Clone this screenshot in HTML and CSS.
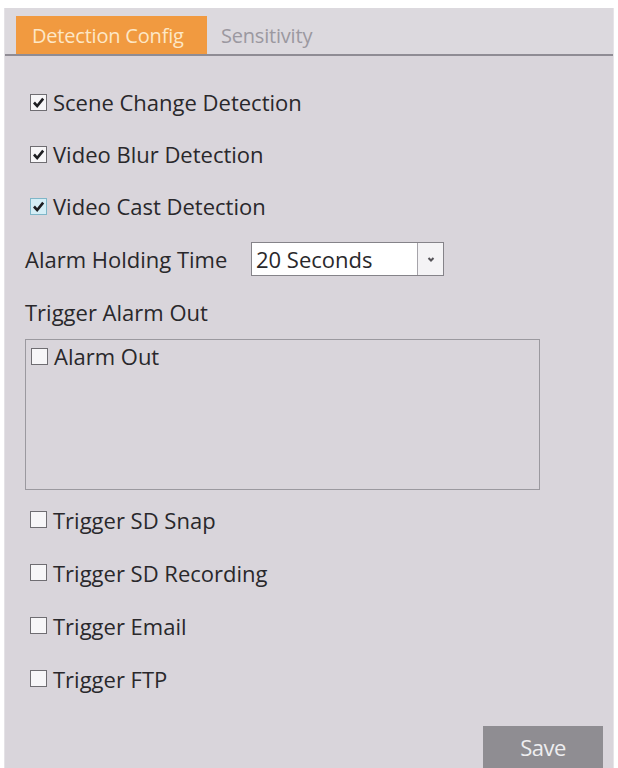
FILE: index.html
```html
<!DOCTYPE html>
<html>
<head>
<meta charset="utf-8">
<link rel="stylesheet" href="styles.css">
</head>
<body>
<div class="panel">
  <div class="tabs">
    <div class="tab active">Detection Config</div>
    <div class="tab">Sensitivity</div>
  </div>
  <div class="content">
    <label class="row"><span class="cb checked"><svg viewBox="0 0 16 16"><path d="M3.2 8 L6.6 11.8 L13 3.8" /></svg></span>Scene Change Detection</label>
    <label class="row"><span class="cb checked"><svg viewBox="0 0 16 16"><path d="M3.2 8 L6.6 11.8 L13 3.8" /></svg></span>Video Blur Detection</label>
    <label class="row"><span class="cb checked focus"><svg viewBox="0 0 16 16"><path d="M3.2 8 L6.6 11.8 L13 3.8" /></svg></span>Video Cast Detection</label>
    <div class="row select-row">
      <span class="label">Alarm Holding Time</span>
      <div class="select">
        <span class="value">20 Seconds</span>
        <span class="arrow"><svg viewBox="0 0 10 10"><path d="M2.5 4 L5 6.5 L7.5 4" /></svg></span>
      </div>
    </div>
    <div class="row plain">Trigger Alarm Out</div>
    <div class="alarm-box">
      <label class="inner"><span class="cb"></span>Alarm Out</label>
    </div>
    <div class="triggers">
      <label class="row"><span class="cb"></span>Trigger SD Snap</label>
      <label class="row"><span class="cb"></span>Trigger SD Recording</label>
      <label class="row"><span class="cb"></span>Trigger Email</label>
      <label class="row"><span class="cb"></span>Trigger FTP</label>
    </div>
    <div class="actions">
      <button class="save">Save</button>
    </div>
  </div>
</div>
</body>
</html>
```
FILE: styles.css
```css
html, body {
  margin: 0;
  padding: 0;
  background: #ffffff;
  height: 100%;
  overflow: hidden;
}
body {
  font-family: "Open Sans", "Noto Sans", sans-serif;
  color: #29282b;
}
.panel {
  margin: 8px 4px 0 4px;
  height: 760px;
  background: #d9d5db;
  border-left: 1px solid #e4e2e6;
  border-right: 1px solid #e6e4e8;
  box-sizing: border-box;
}
.tabs {
  display: flex;
  align-items: flex-end;
  height: 48px;
  box-sizing: border-box;
  padding-left: 11px;
  background: #dcd9de;
  border-bottom: 2px solid #8f8c94;
}
.tab {
  height: 38px;
  display: flex;
  align-items: center;
  padding: 0 14px;
  font-size: 20px;
  color: #9b98a0;
  letter-spacing: -0.2px;
}
.tab.active {
  background: #f19a40;
  color: #fde7c6;
  padding: 0 0 0 16px;
  width: 175px;
}
.content {
  padding: 20px 0 0 20px;
  display: flex;
  flex-direction: column;
}
.row {
  display: flex;
  align-items: center;
  height: 52px;
  font-size: 22px;
}
.content > label.row {
  padding-left: 5px;
}
.cb {
  width: 15px;
  height: 15px;
  border: 1.5px solid #6f6d72;
  background: #f7f6f8;
  margin-right: 6px;
  display: inline-flex;
  align-items: center;
  justify-content: center;
  flex: none;
}
.cb svg {
  width: 15px;
  height: 15px;
}
.cb svg path {
  fill: none;
  stroke: #1e1e22;
  stroke-width: 2.8;
}
.cb.focus {
  background: #d5eef6;
  border-color: #7fb6c8;
}
.select-row {
  height: 54px;
}
.label {
  width: 226px;
}
.select {
  display: flex;
  width: 193px;
  height: 34px;
  box-sizing: border-box;
  border: 1px solid #858389;
  background: #ffffff;
}
.select .value {
  flex: 1;
  display: flex;
  align-items: center;
  padding-left: 4px;
  font-size: 22px;
}
.select .arrow {
  width: 25px;
  border-left: 1px solid #a6a4aa;
  background: #f4f3f5;
  display: flex;
  align-items: center;
  justify-content: center;
}
.select .arrow svg {
  width: 10px;
  height: 10px;
}
.select .arrow svg path {
  fill: none;
  stroke: #555358;
  stroke-width: 2;
}
.plain {
  height: 52px;
}
.alarm-box {
  margin-top: 1px;
  width: 515px;
  height: 151px;
  box-sizing: border-box;
  border: 1.5px solid #9b999f;
  padding: 1px 0 0 5px;
}
.alarm-box .inner {
  display: flex;
  align-items: center;
  font-size: 22px;
}
.triggers {
  margin-top: 3px;
  display: flex;
  flex-direction: column;
}
.triggers .row {
  height: 53px;
  padding-left: 5px;
}
.actions {
  display: flex;
  justify-content: flex-end;
  padding-right: 10px;
  margin-top: 21px;
}
.save {
  width: 120px;
  height: 42px;
  border: none;
  background: #8f8d92;
  color: #eeedf0;
  font-family: "Open Sans", "Noto Sans", sans-serif;
  font-size: 22px;
  letter-spacing: -0.5px;
}
```
